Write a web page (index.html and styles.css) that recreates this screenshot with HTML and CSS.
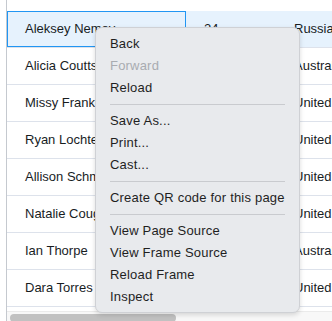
FILE: index.html
```html
<!DOCTYPE html>
<html>
<head>
<meta charset="utf-8">
<link rel="stylesheet" href="styles.css">
</head>
<body>
<div class="grid">
  <div class="spacer"></div>
  <div class="row selected"><div class="cell c1 focus">Aleksey Nemov</div><div class="cell c2">24</div><div class="cell c3">Russia</div></div>
  <div class="row"><div class="cell c1">Alicia Coutts</div><div class="cell c2">24</div><div class="cell c3">Australia</div></div>
  <div class="row"><div class="cell c1">Missy Franklin</div><div class="cell c2">17</div><div class="cell c3">United States</div></div>
  <div class="row"><div class="cell c1">Ryan Lochte</div><div class="cell c2">27</div><div class="cell c3">United States</div></div>
  <div class="row"><div class="cell c1">Allison Schmitt</div><div class="cell c2">22</div><div class="cell c3">United States</div></div>
  <div class="row"><div class="cell c1">Natalie Coughlin</div><div class="cell c2">21</div><div class="cell c3">United States</div></div>
  <div class="row"><div class="cell c1">Ian Thorpe</div><div class="cell c2">17</div><div class="cell c3">Australia</div></div>
  <div class="row"><div class="cell c1">Dara Torres</div><div class="cell c2">33</div><div class="cell c3">United States</div></div>
  <div class="gap"></div>
  <div class="track"><div class="thumb"></div></div>
</div>
<div class="menu">
  <div class="item">Back</div>
  <div class="item disabled">Forward</div>
  <div class="item">Reload</div>
  <div class="sep"></div>
  <div class="item">Save As...</div>
  <div class="item">Print...</div>
  <div class="item">Cast...</div>
  <div class="sep"></div>
  <div class="item">Create QR code for this page</div>
  <div class="sep"></div>
  <div class="item">View Page Source</div>
  <div class="item">View Frame Source</div>
  <div class="item">Reload Frame</div>
  <div class="item">Inspect</div>
</div>
</body>
</html>
```
FILE: styles.css
```css
html, body {
  margin: 0;
  padding: 0;
  background: #ffffff;
  overflow: hidden;
}
body {
  width: 332px;
  height: 321px;
  position: relative;
  font-family: "Liberation Sans", Arial, sans-serif;
}
.grid {
  margin-left: 6px;
  width: 420px;
  height: 321px;
  border-left: 1px solid #c5c9cf;
  overflow: hidden;
  color: #181d1f;
  font-size: 13px;
}
.spacer {
  height: 11px;
}
.row {
  display: flex;
  height: 36px;
  border-bottom: 1px solid #dde2eb;
}
.row.selected {
  background: #e6f2fd;
}
.cell {
  box-sizing: border-box;
  height: 36px;
  line-height: 34px;
  padding-left: 17px;
  border: 1px solid transparent;
  white-space: nowrap;
  overflow: hidden;
}
.c1 { width: 179px; }
.c2 { width: 90px; }
.c3 { width: 150px; }
.cell.focus {
  border-color: #2196f3;
}
.gap {
  height: 4px;
}
.track {
  height: 10px;
  border-top: 1px solid #ebebeb;
  background: #f8f8f8;
  padding-top: 2px;
}
.thumb {
  margin-left: 3px;
  width: 166px;
  height: 8px;
  border-radius: 4px;
  background: #c1c1c1;
}
.menu {
  position: absolute;
  left: 95px;
  top: 27px;
  width: 205px;
  box-sizing: border-box;
  padding: 5px 0 4px;
  background: #e8eaed;
  border: 1px solid #cfd1d5;
  border-radius: 7px;
  box-shadow: 0 2px 5px rgba(0, 0, 0, 0.14);
  color: #1f1f1f;
  font-size: 13px;
  letter-spacing: 0.2px;
}
.item {
  height: 22px;
  line-height: 22px;
  padding-left: 14px;
  white-space: nowrap;
}
.item.disabled {
  color: #a9acb1;
}
.sep {
  height: 11px;
  display: flex;
  align-items: center;
  padding: 0 14px;
}
.sep::before {
  content: "";
  flex: 1;
  height: 1px;
  background: #c9cbcf;
}
```
